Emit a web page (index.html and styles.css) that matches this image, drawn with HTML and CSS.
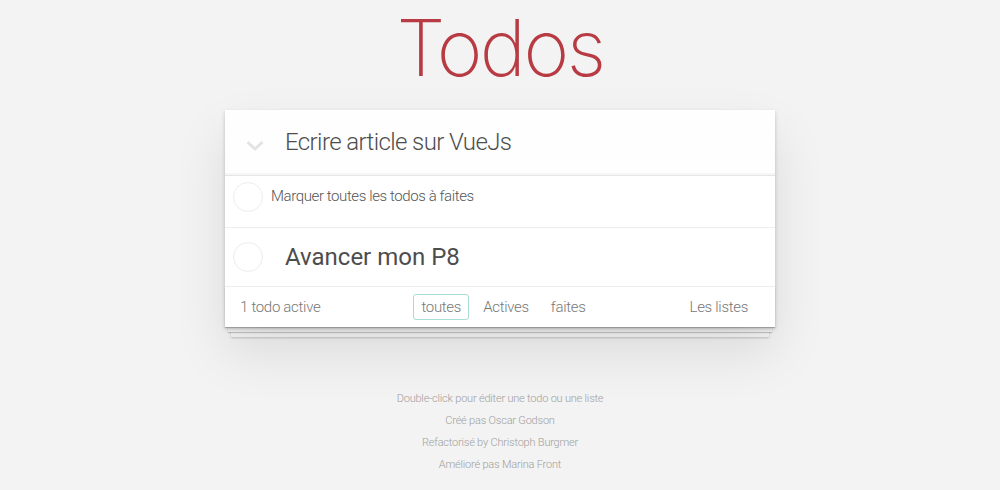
FILE: index.html
```html
<!DOCTYPE html>
<html lang="fr">
<head>
<meta charset="utf-8">
<title>Todos</title>
<link rel="stylesheet" href="styles.css">
</head>
<body>
<section class="todoapp">
  <h1 class="title">Todos</h1>
  <div class="panel">
    <header class="new-row">
      <span class="toggle-all">
        <svg width="18" height="12" viewBox="0 0 18 12"><polyline points="1.5,2 9,9 16.5,2" fill="none" stroke="#e3e3e3" stroke-width="3"/></svg>
      </span>
      <span class="new-todo">Ecrire article sur VueJs</span>
    </header>
    <ul class="todo-list">
      <li class="item item-small">
        <span class="check"></span>
        <span class="label-small">Marquer toutes les todos à faites</span>
      </li>
      <li class="item item-big">
        <span class="check"></span>
        <span class="label-big">Avancer mon P8</span>
      </li>
    </ul>
    <footer class="footer">
      <span class="count">1 todo active</span>
      <ul class="filters">
        <li><a class="filter selected">toutes</a></li>
        <li><a class="filter">Actives</a></li>
        <li><a class="filter">faites</a></li>
      </ul>
      <a class="filter lists">Les listes</a>
    </footer>
  </div>
</section>
<footer class="info">
  <p>Double-click pour éditer une todo ou une liste</p>
  <p>Créé pas Oscar Godson</p>
  <p>Refactorisé by Christoph Burgmer</p>
  <p>Amélioré pas Marina Front</p>
</footer>
</body>
</html>
```

FILE: styles.css
```css
html, body {
  margin: 0;
  padding: 0;
}
body {
  background: #f3f3f3;
  font-family: "Roboto", "Liberation Sans", sans-serif;
  font-weight: 300;
  color: #4d4d4d;
  -webkit-font-smoothing: antialiased;
}
.todoapp {
  width: 550px;
  margin: 0 auto;
}
.title {
  margin: 0;
  height: 110px;
  text-align: center;
  font-family: "Inter", "Roboto", sans-serif;
  font-weight: 200;
  font-size: 78px;
  letter-spacing: -2.5px;
  line-height: 95px;
  color: #b83a42;
}
.panel {
  position: relative;
  background: #fff;
  box-shadow: 0 2px 4px 0 rgba(0,0,0,0.2), 0 25px 50px 0 rgba(0,0,0,0.1);
}
.panel::after {
  content: "";
  position: absolute;
  left: 0;
  right: 0;
  bottom: 0;
  height: 40px;
  z-index: -1;
  box-shadow: 0 1px 1px rgba(0,0,0,0.2), 0 8px 0 -3px #f6f6f6, 0 9px 1px -3px rgba(0,0,0,0.2), 0 16px 0 -6px #f6f6f6, 0 17px 2px -6px rgba(0,0,0,0.2);
}
.new-row {
  display: flex;
  align-items: center;
  height: 65px;
  background: rgba(0,0,0,0.003);
  box-shadow: inset 0 -2px 1px rgba(0,0,0,0.03);
}
.toggle-all {
  width: 60px;
  display: flex;
  justify-content: center;
  padding-top: 6px;
}
.new-todo {
  font-size: 24px;
  letter-spacing: -0.6px;
  color: #4d4d4d;
  padding-bottom: 1px;
}
.todo-list {
  list-style: none;
  margin: 0;
  padding: 0;
  border-top: 1px solid #e6e6e6;
}
.item {
  display: flex;
  align-items: center;
  border-bottom: 1px solid #ededed;
  padding-left: 8px;
}
.item-small {
  height: 52px;
  box-sizing: border-box;
  padding-bottom: 9px;
}
.item-big { height: 58px; }
.check {
  width: 28px;
  height: 28px;
  border: 1px solid #ededed;
  border-radius: 50%;
  flex: none;
}
.label-small {
  font-size: 15px;
  letter-spacing: -0.4px;
  color: #555;
  margin-left: 8px;
  padding-bottom: 2px;
}
.label-big {
  font-size: 24px;
  font-weight: 400;
  color: #4d4d4d;
  margin-left: 22px;
}
.footer {
  display: flex;
  align-items: center;
  height: 40px;
  padding: 0 18px 0 15px;
  color: #777;
  font-size: 15px;
  letter-spacing: -0.3px;
}
.count {
  flex: 1;
}
.filters {
  list-style: none;
  display: flex;
  margin: 0 0 0 20px;
  padding: 0;
}
.filters li {
  display: block;
}
.filter {
  display: block;
  margin: 0 3px;
  padding: 3px 7px;
  border: 1px solid transparent;
  border-radius: 3px;
  color: #777;
  text-decoration: none;
}
.filter.selected {
  border-color: #a9ddd4;
}
.lists {
  flex: 1;
  text-align: right;
  margin: 0;
  padding: 3px 8px 3px 0;
}
.info {
  margin-top: 61px;
  text-align: center;
  color: #a0a0a0;
  font-size: 11px;
  letter-spacing: -0.2px;
}
.info p {
  margin: 0;
  line-height: 22px;
}
```
